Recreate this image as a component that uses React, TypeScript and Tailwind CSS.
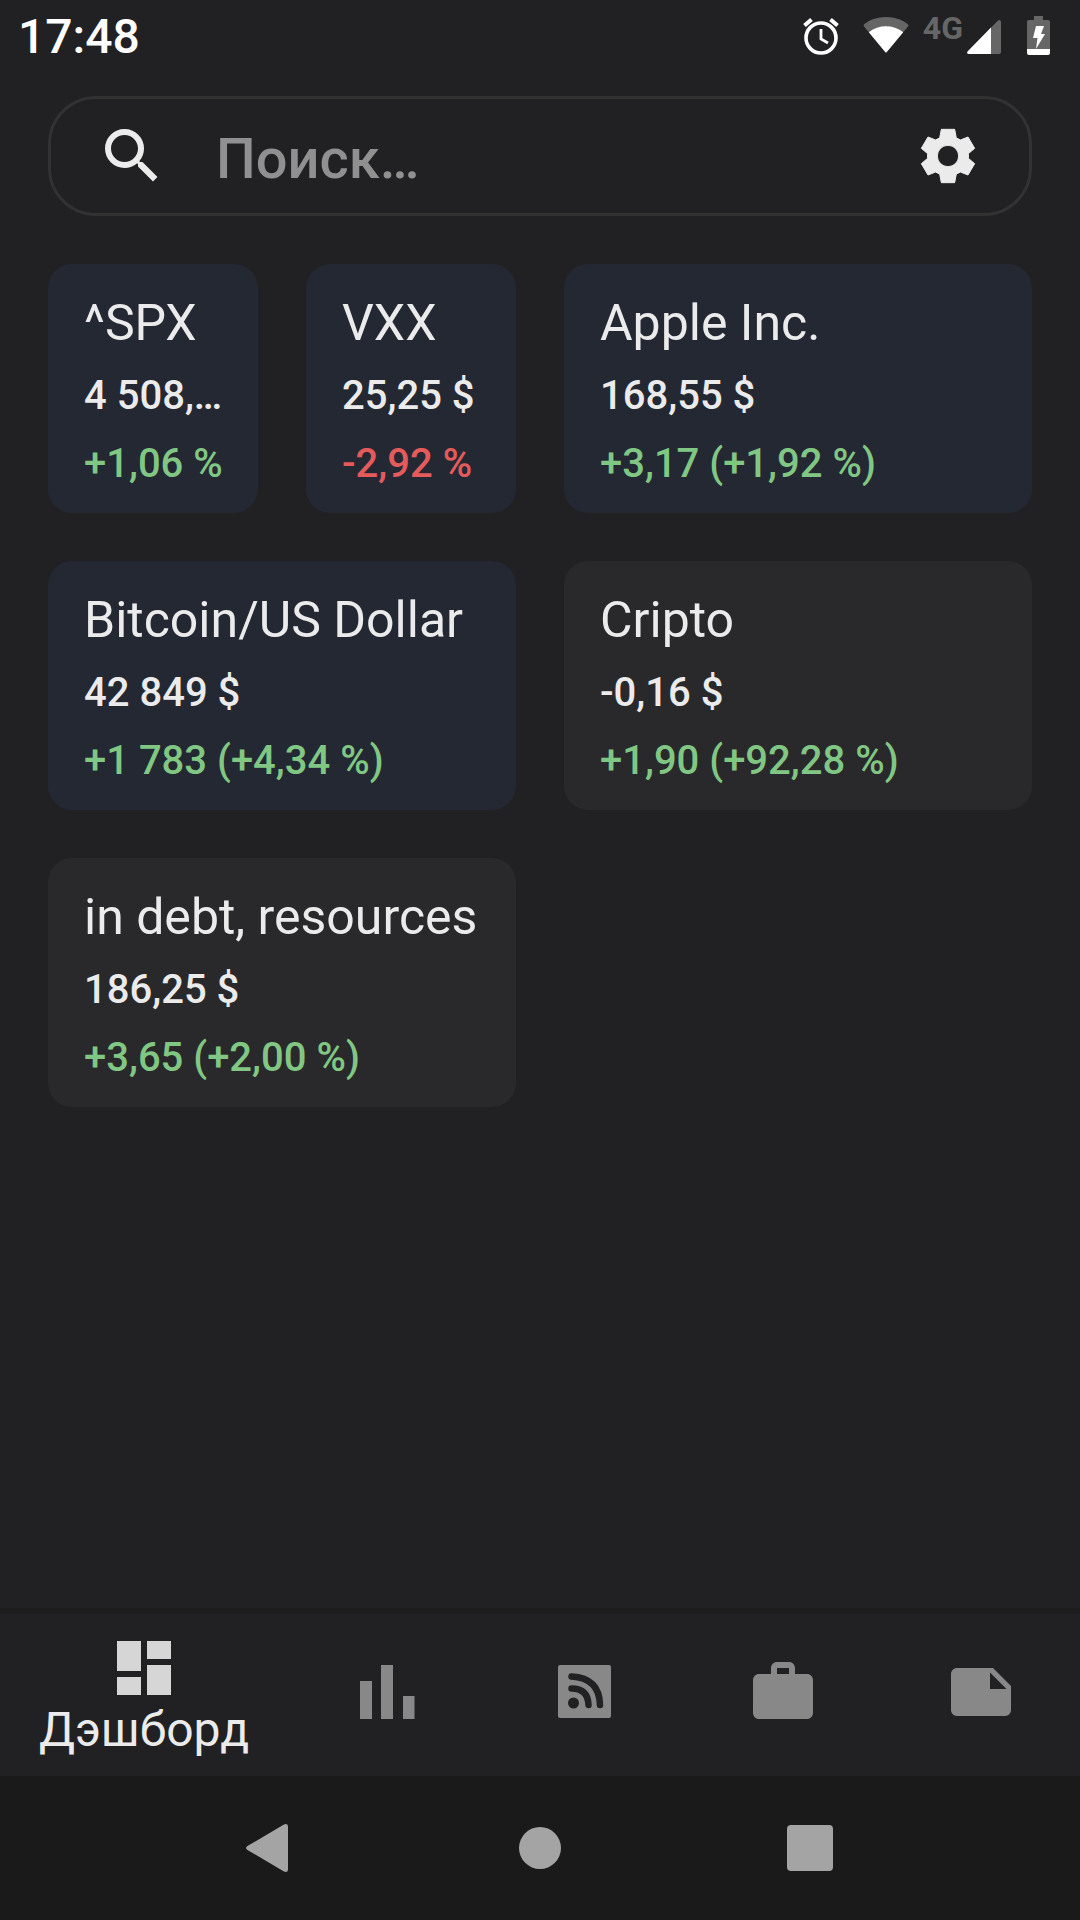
import React from "react";
import { MdDashboard, MdNote, MdSearch, MdWork } from "react-icons/md";

type Tile = {
  title: string;
  price: string;
  change: string;
  isUp: boolean;
  wide: boolean;
  kind: "quote" | "portfolio";
};

const tiles: Tile[] = [
  {
    title: "^SPX",
    price: "4\u00a0508,…",
    change: "+1,06 %",
    isUp: true,
    wide: false,
    kind: "quote",
  },
  {
    title: "VXX",
    price: "25,25\u00a0$",
    change: "-2,92 %",
    isUp: false,
    wide: false,
    kind: "quote",
  },
  {
    title: "Apple Inc.",
    price: "168,55\u00a0$",
    change: "+3,17 (+1,92 %)",
    isUp: true,
    wide: true,
    kind: "quote",
  },
  {
    title: "Bitcoin/US Dollar",
    price: "42\u00a0849\u00a0$",
    change: "+1\u00a0783 (+4,34 %)",
    isUp: true,
    wide: true,
    kind: "quote",
  },
  {
    title: "Cripto",
    price: "-0,16\u00a0$",
    change: "+1,90 (+92,28 %)",
    isUp: true,
    wide: true,
    kind: "portfolio",
  },
  {
    title: "in debt, resources",
    price: "186,25\u00a0$",
    change: "+3,65 (+2,00 %)",
    isUp: true,
    wide: true,
    kind: "portfolio",
  },
];

const tileColors: Record<Tile["kind"], string> = {
  quote: "bg-[#242832]",
  portfolio: "bg-[#29292b]",
};

const AlarmIcon = () => (
  <svg
    className="w-9 h-10"
    viewBox="0 0 36 40"
    fill="none"
    stroke="currentColor"
    aria-hidden="true"
  >
    <circle cx="18" cy="22" r="15" strokeWidth="3.6" />
    <path d="M18 13v10l7 4" strokeWidth="2.8" />
    <path d="M1.5 9.5l7-6M34.5 9.5l-7-6" strokeWidth="4" />
  </svg>
);

const WifiIcon = () => (
  <svg className="w-[46px] h-10" viewBox="0 0 46 40" aria-hidden="true">
    <path
      d="M23 1C14 1 6.5 4 1.2 8.200Q0 9.200 1 10.400L21.800 35.600Q23 37.500 24.200 35.600L45 10.400Q46 9.200 44.800 8.200C39.500 4 32 1 23 1z"
      fill="#666667"
    />
    <path
      d="M5.800 16.200C11 12.300 17 10.300 23 10.300S35 12.300 40.200 16.200L24.200 35.600Q23 37.500 21.800 35.600z"
      fill="currentColor"
    />
  </svg>
);

const SignalIcon = () => (
  <svg className="w-[34px] h-10" viewBox="0 0 34 40" aria-hidden="true">
    <path
      d="M34 6V36q0 2-2 2H1.500Q-.8 37.500.8 35.300L31 4.500Q33.500 3 34 6z"
      fill="#666667"
    />
    <path d="M24 11.600V38H1.500Q-.8 37.500.8 35.300z" fill="currentColor" />
  </svg>
);

const BatteryIcon = () => (
  <svg className="w-[23px] h-10" viewBox="0 0 23 40" aria-hidden="true">
    <path d="M7 0h9v4h5q2 0 2 2v28H0V6q0-2 2-2h5z" fill="#666667" />
    <path d="M0 33h23v4q0 2-2 2H2q-2 0-2-2z" fill="currentColor" />
    <path d="M9 10h8l-3 8h4L9 33l1.500-11H6z" fill="currentColor" />
  </svg>
);

const GearIcon = () => (
  <svg
    className="w-[72px] h-[72px]"
    viewBox="-108 -108 216 216"
    fill="currentColor"
    stroke="currentColor"
    strokeWidth="3"
    strokeLinejoin="round"
    aria-hidden="true"
  >
    <path
      fillRule="evenodd"
      d="M-20-80H20L25-54Q31-52 37-48L60-57L80-23L61-7Q62 0 61 7L80 23L60 57L37 48Q31 52 25 54L20 80H-20L-25 54Q-31 52-37 48L-60 57L-80 23L-61 7Q-62 0-61-7L-80-23L-60-57L-37-48Q-31-52-25-54zM0-32A32 32 0 1 0 0 32A32 32 0 1 0 0-32z"
    />
  </svg>
);

const ChartIcon = () => (
  <svg
    className="w-[72px] h-[72px]"
    viewBox="0 0 72 72"
    fill="currentColor"
    aria-hidden="true"
  >
    <path d="M9 25h12v38H9zM30 9h12v54H30zM52 40h11.500v23H52z" />
  </svg>
);

const FeedIcon = () => (
  <svg className="w-[72px] h-[72px]" viewBox="0 0 72 72" aria-hidden="true">
    <rect x="9" y="9" width="53" height="53" rx="2" fill="currentColor" />
    <circle cx="24.500" cy="47" r="5.500" fill="#212123" />
    <path
      d="M22.500 32.500Q39 32.500 39.500 49M22.500 20.500Q50.500 22 51 49"
      fill="none"
      stroke="#212123"
      strokeWidth="6.500"
      strokeLinecap="round"
    />
  </svg>
);

const tabs = [
  { label: "Графики", icon: <ChartIcon /> },
  { label: "Новости", icon: <FeedIcon /> },
  { label: "Портфель", icon: <MdWork className="w-[72px] h-[72px]" /> },
  { label: "Заметки", icon: <MdNote className="w-[72px] h-[72px]" /> },
];

const App: React.FC = () => {
  return (
    <div className="min-h-screen flex flex-col bg-[#212123] text-[#ebebec] font-[Roboto,sans-serif]">
      {/* Status bar */}
      <header className="h-[72px] flex items-center justify-between pl-[18px] pr-[30px] text-white">
        <time className="pt-0.5 text-5xl font-medium">17:48</time>
        <div className="flex items-center">
          <AlarmIcon />
          <div className="ml-6 flex">
            <WifiIcon />
            <span className="ml-3.5 text-[32px] leading-6 font-bold text-[#666667]">
              4G
            </span>
            <div className="ml-1">
              <SignalIcon />
            </div>
          </div>
          <div className="ml-[26px]">
            <BatteryIcon />
          </div>
        </div>
      </header>

      <main className="flex-1 px-12 pt-6 pb-12">
        {/* Search */}
        <form
          role="search"
          className="h-[120px] flex items-center border-3 border-[#323233] rounded-[48px] px-[45px]"
        >
          <label htmlFor="search" aria-label="Поиск">
            <MdSearch className="w-[72px] h-[72px]" />
          </label>
          <input
            id="search"
            type="text"
            placeholder="Поиск…"
            className="flex-1 min-w-0 ml-12 pt-1.5 bg-transparent outline-none text-[56px] leading-[72px] font-medium placeholder:text-[#909091]"
          />
          <button type="button" aria-label="Настройки">
            <GearIcon />
          </button>
        </form>

        {/* Tiles */}
        <div className="grid grid-cols-4 gap-12 mt-12">
          {tiles.map((tile) => (
            <article
              key={tile.title}
              className={`min-w-0 rounded-3xl px-9 pt-7 pb-[17px] whitespace-nowrap ${
                tileColors[tile.kind]
              } ${tile.wide ? "col-span-2" : ""}`}
            >
              <h2 className="text-[50px] leading-[62px]">{tile.title}</h2>
              <p className="mt-2.5 text-[40px] leading-[64px] font-medium">
                {tile.price}
              </p>
              <p
                className={`mt-1 text-[40px] leading-[64px] font-medium ${
                  tile.isUp ? "text-[#81c784]" : "text-[#e55b5b]"
                }`}
              >
                {tile.change}
              </p>
            </article>
          ))}
        </div>
      </main>

      {/* Tab bar */}
      <nav className="h-[168px] flex border-t-6 border-[#1d1d1e] text-[#888889]">
        <button
          type="button"
          className="w-[288px] flex flex-col items-center pt-[18px] text-[#d6d6d7]"
        >
          <MdDashboard className="w-[72px] h-[72px]" />
          <span className="text-5xl leading-[52px] text-[#ebebec]">
            Дэшборд
          </span>
        </button>
        {tabs.map((tab) => (
          <button
            key={tab.label}
            type="button"
            aria-label={tab.label}
            className="flex-1 flex items-center justify-center pb-1.5"
          >
            {tab.icon}
          </button>
        ))}
      </nav>

      {/* System navigation */}
      <footer className="h-36 grid grid-cols-3 px-[135px] bg-[#1a1a1a] text-[#a4a4a4]">
        <button
          type="button"
          aria-label="Назад"
          className="flex items-center justify-center"
        >
          <svg className="w-12 h-12" viewBox="0 0 48 48" fill="currentColor">
            <path d="M1.500 22Q-1.500 24 1.500 26L38 47.500Q42 49 42 45V3Q42-1 38 .5z" />
          </svg>
        </button>
        <button
          type="button"
          aria-label="Домой"
          className="flex items-center justify-center"
        >
          <span className="w-[42px] h-[42px] rounded-full bg-current" />
        </button>
        <button
          type="button"
          aria-label="Недавние"
          className="flex items-center justify-center"
        >
          <span className="w-[46px] h-[46px] rounded bg-current" />
        </button>
      </footer>
    </div>
  );
};

export default App;
